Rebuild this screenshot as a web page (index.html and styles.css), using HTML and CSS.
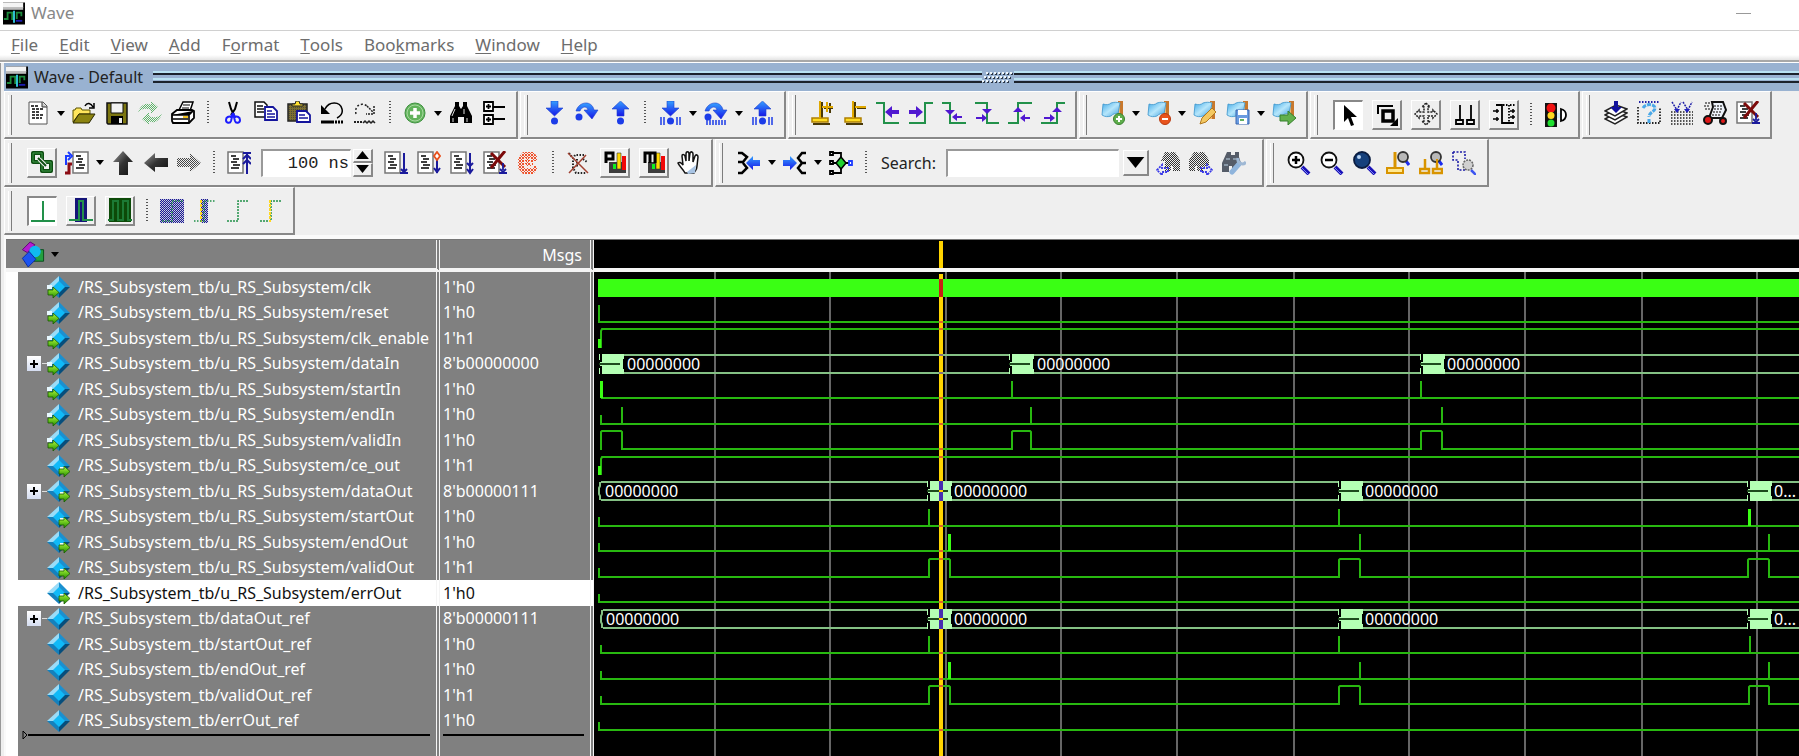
FILE: index.html
```html
<!DOCTYPE html>
<html lang="en">
<head>
<meta charset="utf-8">
<title>Wave</title>
<link rel="stylesheet" href="styles.css">
</head>
<body>
<svg class="sprite" aria-hidden="true">
  <defs>
    <pattern id="ck-green" width="2" height="2" patternUnits="userSpaceOnUse"><path d="M0 0h1v1H0zM1 1h1v1H1z" fill="#5fb56b"/></pattern>
    <pattern id="ck-gray" width="2" height="2" patternUnits="userSpaceOnUse"><path d="M0 0h1v1H0zM1 1h1v1H1z" fill="#333"/></pattern>
    <pattern id="ck-blue" width="2" height="2" patternUnits="userSpaceOnUse"><path d="M0 0h1v1H0zM1 1h1v1H1z" fill="#1b1b8f"/><path d="M1 0h1v1H1zM0 1h1v1H1z" fill="#b4b4dc"/></pattern>
    <pattern id="ck-red" width="3" height="3" patternUnits="userSpaceOnUse"><path d="M0 0h2v2H0zM2 2h1v1H2z" fill="#f0532c"/></pattern>
    <pattern id="ck-olive" width="2" height="2" patternUnits="userSpaceOnUse"><path d="M0 0h2v2H0z" fill="#7d7030"/><path d="M0 0h1v1H0z" fill="#4c4a3c"/></pattern>
    <linearGradient id="g-blue" x1="0" y1="0" x2="0" y2="1"><stop offset="0" stop-color="#35a0ff"/><stop offset="1" stop-color="#1616e8"/></linearGradient>
    <linearGradient id="g-dark" x1="0" y1="0" x2="1" y2="1"><stop offset="0" stop-color="#999"/><stop offset=".5" stop-color="#333"/><stop offset="1" stop-color="#111"/></linearGradient>
    <linearGradient id="g-flag" x1="0" y1="0" x2="1" y2="1"><stop offset="0" stop-color="#3fa9e8"/><stop offset=".5" stop-color="#b6e6fb"/><stop offset="1" stop-color="#3a9ddf"/></linearGradient>
    <linearGradient id="g-lime" x1="0" y1="0" x2="0" y2="1"><stop offset="0" stop-color="#b4ff3c"/><stop offset="1" stop-color="#1f8a00"/></linearGradient>
  </defs>
  <symbol id="app" viewBox="0 0 24 24"><path fill="#000" d="M0 0h24v24H0z"/><path fill="#f4f4f4" d="M0 0h22v6H0z"/><path fill="#bbb" d="M0 5h22v3H0z"/><path fill="none" stroke="#1c8a3c" stroke-width="2" d="M1 18h4v-7h5v7h2M15 18v-7h5v4"/><path fill="#35d0e8" d="M11 9h2v13h-2z"/><path fill="#1c1cb0" d="M14 19h7v2h-7z"/></symbol>
  <symbol id="caret" viewBox="0 0 8 5"><path fill="#000" d="M0 0h8L4 5z"/></symbol>
  <symbol id="page" viewBox="0 0 24 24"><path fill="#fff" stroke="#777" stroke-width="1.500" d="M1 1h15v21H1z"/><path stroke="#000" stroke-width="1.600" d="M4 5h5M6 8h6M4 11h6M6 14h7M4 17h8"/></symbol>
  <symbol id="page2" viewBox="0 0 24 24"><path fill="#fff" stroke="#777" stroke-width="1.5" d="M8 1h15v21H8z"/><path stroke="#000" stroke-width="1.6" d="M11 5h5M13 8h5M11 11h6M14 14h6M11 17h8"/></symbol>
  <symbol id="down" viewBox="0 0 24 24"><path fill="url(#g-blue)" stroke="#1c3ccc" stroke-width=".6" d="M9 0h7v7h5l-8.500 8L4 7h5z"/></symbol>
  <symbol id="up" viewBox="0 0 24 24"><path fill="url(#g-blue)" stroke="#1c3ccc" stroke-width=".6" d="M9 15h7V8h5L12.500 0 4 8h5z"/></symbol>
  <symbol id="over" viewBox="0 0 24 24"><path fill="url(#g-blue)" stroke="#1c3ccc" stroke-width=".6" d="M1 10C4 0 17-1 19 9h4l-6 9-8-9h4c-1-4-6-4-8 1z"/><circle cx="4" cy="16" r="3.500" fill="#1c3ce8"/></symbol>
  <symbol id="flag" viewBox="0 0 24 24"><path fill="#c8782c" d="M17 0h5v18h-5z"/><path fill="#f2b76c" d="M17 1h2v17h-2z"/><path fill="url(#g-flag)" stroke="#3a94cc" stroke-width=".8" d="M2 3c3 1 6 1 8-1 3-1 6-1 9 0l-2 11c-3-1-5 0-7 2-3 1-6 1-9-1z"/></symbol>
  <symbol id="diamond" viewBox="0 0 24 24"><path fill="#9adcf8" d="M12 1v6l-5 5H0z"/><path fill="#1b90d0" d="M12 1l11 11h-6l-5-5z"/><path fill="#1580bc" d="M0 12h7l5 5v6z"/><path fill="#064e7c" d="M12 23V17l5-5h6z"/><path fill="#10baf8" d="M12 6l6 6-6 6-6-6z"/></symbol>
  <symbol id="sig-in" viewBox="0 0 24 24"><use href="#diamond" width="24" height="24"/><path fill="#e8f8ff" d="M0 10h5v4H0z"/><path fill="url(#g-lime)" stroke="#1a5c00" stroke-width=".8" d="M1 15h5v-3l6 5.500L6 23v-3H1z"/></symbol>
  <symbol id="sig-out" viewBox="0 0 24 24"><use href="#diamond" width="24" height="24"/><path fill="#f4fff0" d="M13 13h5v3h-5z"/><path fill="url(#g-lime)" stroke="#1a5c00" stroke-width=".8" d="M12 15h5v-3l6 5.500L17 23v-3h-5z"/></symbol>
  <symbol id="lens" viewBox="0 0 24 24"><path stroke="#1a12b8" stroke-width="4" d="M15 16l7 7"/><path stroke="#7c88f0" stroke-width="1" d="M15 17l6 6"/></symbol>
  <symbol id="bars" viewBox="0 0 24 24"><path fill="#3c3c3c" d="M6 12h17v11H6z"/><path fill="#ffd800" stroke="#333" stroke-width=".6" d="M14 3h4v16h-4z"/><path fill="#f00808" d="M19 6h4v14h-4z"/><path fill="#10f020" d="M10 14h3v5h-3z"/></symbol>
  <symbol id="xpage" viewBox="0 0 24 24"><use href="#page" width="24" height="24"/><path stroke="#7c0a0a" stroke-width="3" d="M8 2l14 14M22 0L8 17"/><path fill="none" stroke="#1b1b9c" stroke-width="1.800" d="M20 12v7M17 18l3 3 3-3M16 22h8"/></symbol>
  <symbol id="burst" viewBox="0 0 25 20"><path fill="#000" d="M0 0h25v20H0z"/><path fill="#b4ffb4" d="M0 0h1v6H0zM0 14h1v6H0zM3 0h22v5h-1v10h1v5H3zM1 8h2v4H1z"/><path fill="#1d4a1d" d="M0 9h21v2H0z"/></symbol>
</svg>

<header class="titlebar">
  <svg class="app-icon" aria-hidden="true"><use href="#app"/></svg>
  <h1 class="title">Wave</h1>
  <button class="minimize" aria-label="Minimize"></button>
</header>

<nav class="menubar">
  <button class="menu"><u>F</u>ile</button>
  <button class="menu"><u>E</u>dit</button>
  <button class="menu"><u>V</u>iew</button>
  <button class="menu"><u>A</u>dd</button>
  <button class="menu">F<u>o</u>rmat</button>
  <button class="menu"><u>T</u>ools</button>
  <button class="menu">Boo<u>k</u>marks</button>
  <button class="menu"><u>W</u>indow</button>
  <button class="menu"><u>H</u>elp</button>
</nav>

<main class="dock">
  <div class="dock-title">
    <svg class="app-icon" aria-hidden="true"><use href="#app"/></svg>
    <h2 class="dock-name">Wave - Default</h2>
    <div class="rail"></div>
    <svg class="grip-dots" aria-hidden="true"><path stroke="#2c3644" stroke-width="2" stroke-dasharray="2 2" d="M5 4h26M3 8h26M1 12h26"/><path stroke="#eef6fb" stroke-width="2" stroke-dasharray="2 2" d="M4 3h26M2 7h26M0 11h26"/></svg>
    <div class="rail"></div>
  </div>

  <div class="band band-first">
    <div class="group">
      <button class="tool" aria-label="New"><svg class="icon" viewBox="0 0 24 24"><path fill="#fff" stroke="#555" d="M3 1h14l4 4v18H3z"/><path fill="#ccc" stroke="#333" d="M16 1v5h5"/><path stroke="#000" stroke-width="1.500" stroke-dasharray="3 1" d="M5 5h8M6 8h12M6 11h8M6 14h12M6 17h10"/></svg></button>
      <button class="drop" aria-label="New options"><svg class="caret"><use href="#caret"/></svg></button>
      <button class="tool" aria-label="Open"><svg class="icon" viewBox="0 0 24 24"><path fill="#ffe65c" stroke="#5a5200" d="M1 21V9h2l1-2h5l1 2h8v4H7z"/><path fill="#8c8410" stroke="#2a2800" d="M1 22l6-9h16l-6 9z"/><path fill="none" stroke="#000" stroke-width="1.500" d="M13 5c2-4 6-3 8 1M22 2v5h-5"/></svg></button>
      <button class="tool" aria-label="Save"><svg class="icon" viewBox="0 0 24 24"><path fill="#7c7610" stroke="#111" stroke-width="1.500" d="M2 2h20v21H3l-1-1z"/><path fill="#f2f2f2" stroke="#111" d="M6 2h12v10H6z"/><path fill="#000" d="M6 15h12v8H6z"/><path fill="#eee" d="M14 17h3v5h-3z"/></svg></button>
      <button class="tool" aria-label="Reload"><svg class="icon" viewBox="0 0 24 24"><path fill="url(#ck-green)" d="M0 11C3 3 9 1 13 4V0l7 6-7 7V9C9 7 4 7 0 11zM24 13c-3 8-9 10-13 7v4l-7-6 7-7v4c4 2 9 2 13-2z"/></svg></button>
      <button class="tool" aria-label="Print"><svg class="icon" viewBox="0 0 24 24"><path fill="#fff" stroke="#000" stroke-width="1.500" d="M8 9l4-8h10l-3 9z"/><path stroke="#000" d="M12 4h7M11 7h7"/><path fill="#fff" stroke="#000" stroke-width="1.800" d="M1 13l5-4h15l2 1v7l-5 5H2l-1-2z"/><path stroke="#000" stroke-width="1.600" d="M1 14h17l4-4M18 14v8M2 18h15"/><path fill="#f0c020" d="M12 15h5v2h-5z"/></svg></button>
      <span class="sep"></span>
      <button class="tool" aria-label="Cut"><svg class="icon" viewBox="0 0 24 24"><path fill="none" stroke="#000" stroke-width="2" d="M8 1l2 7 3 6M16 1l-2 7-4 6"/><path fill="none" stroke="#1c1cff" stroke-width="2" d="M12 12l-2 4c-2-1-5 0-5 3s4 4 5 1zM12 12l2 4c2-1 5 0 5 3s-4 4-5 1z"/></svg></button>
      <button class="tool" aria-label="Copy"><svg class="icon" viewBox="0 0 24 24"><path fill="#fff" stroke="#111" stroke-width="1.500" d="M1 1h9l3 3v12H1z"/><path stroke="#111" stroke-width="1.500" d="M3 5h6M3 8h7M3 11h7"/><path fill="#fff" stroke="#14149c" stroke-width="1.800" d="M11 6h8l4 4v9H11z"/><path stroke="#14149c" stroke-width="1.500" d="M13 10h5M13 13h8M13 16h8"/></svg></button>
      <button class="tool" aria-label="Paste"><svg class="icon" viewBox="0 0 24 24"><path fill="url(#ck-olive)" stroke="#222" stroke-width="1.500" d="M1 3h19v17H1z"/><path fill="#ffe030" stroke="#222" d="M5 5V3h3l1-3h3l1 3h3v2z"/><path fill="#fff" stroke="#14149c" stroke-width="1.800" d="M10 10h9l4 4v7H10z"/><path stroke="#14149c" stroke-width="1.500" d="M12 14h6M12 17h9"/></svg></button>
      <button class="tool" aria-label="Undo"><svg class="icon" viewBox="0 0 24 24"><path fill="#000" d="M1 4v9h9z"/><path fill="none" stroke="#000" stroke-width="1.500" d="M5 8c4-8 15-8 17 0 1 4-1 7-5 9"/><path stroke="#000" stroke-width="3" d="M1 21h13"/><path stroke="#000" stroke-width="3" stroke-dasharray="2 1" d="M15 21h9"/></svg></button>
      <button class="tool" aria-label="Redo"><svg class="icon" viewBox="0 0 24 24"><path fill="none" stroke="#222" stroke-width="1.500" stroke-dasharray="2 2" d="M3 13c-2-9 6-12 11-8"/><path fill="none" stroke="#222" stroke-width="1.500" stroke-dasharray="2 1" d="M14 5l7 7M21 5v8h-8"/><path fill="none" stroke="#222" stroke-width="1.500" d="M10 22l2-2 2 2 2-2 2 2 2-2 2 2"/><path stroke="#222" stroke-width="2" stroke-dasharray="2 1" d="M1 21h9"/></svg></button>
      <span class="sep"></span>
      <button class="tool" aria-label="Add selected"><svg class="icon" viewBox="0 0 24 24"><circle cx="12" cy="12" r="10" fill="#62b35c" stroke="#3f9140"/><circle cx="12" cy="12" r="8" fill="none" stroke="#a8d8a0"/><path stroke="#fff" stroke-width="3.500" d="M12 7v10M7 12h10"/></svg></button>
      <button class="drop" aria-label="Add options"><svg class="caret"><use href="#caret"/></svg></button>
      <button class="tool" aria-label="Find"><svg class="icon" viewBox="0 0 24 24"><path fill="#000" d="M6 1h4v4l2 3 2-3V1h4v4l5 10v7h-8v-6h-6v6H1v-7L6 5z"/><path stroke="#ddd" d="M6 8L3 15M15 8v5M4 17v4M18 17v4"/></svg></button>
      <button class="tool" aria-label="Expand"><svg class="icon" viewBox="0 0 24 24"><path fill="#fff" stroke="#000" stroke-width="1.800" d="M2 1h9v9H2zM2 14h9v9H2z"/><path stroke="#000" stroke-width="1.800" d="M4 5.500h5M6.500 3v5M4 18.500h5M6.500 16v5M11 6h12M11 18h12"/></svg></button>
    </div>
    <div class="group">
      <button class="tool" aria-label="Step into"><svg class="icon" viewBox="0 0 24 24"><use href="#down"/><circle cx="12.500" cy="20" r="3.500" fill="#1c3ce8"/></svg></button>
      <button class="tool" aria-label="Step over"><svg class="icon" viewBox="0 0 24 24"><use href="#over"/></svg></button>
      <button class="tool" aria-label="Step out"><svg class="icon" viewBox="0 0 24 24"><use href="#up"/><circle cx="12.500" cy="20" r="3.500" fill="#1c3ce8"/></svg></button>
      <span class="sep"></span>
      <button class="tool" aria-label="Step into current"><svg class="icon" viewBox="0 0 24 24"><use href="#down"/><circle cx="12.500" cy="20" r="3.500" fill="#1c3ce8"/><path stroke="#1c3ce8" stroke-width="1.500" d="M3 16v8M6 16v8M19 16v8M22 16v8"/></svg></button>
      <button class="drop" aria-label="Step into options"><svg class="caret"><use href="#caret"/></svg></button>
      <button class="tool" aria-label="Step over current"><svg class="icon" viewBox="0 0 24 24"><use href="#over"/><path stroke="#1c3ce8" stroke-width="1.500" d="M3 19v5M6 19v5M9 19v5M12 19v5M15 19v5M18 19v5M21 19v5"/></svg></button>
      <button class="drop" aria-label="Step over options"><svg class="caret"><use href="#caret"/></svg></button>
      <button class="tool" aria-label="Step out current"><svg class="icon" viewBox="0 0 24 24"><use href="#up"/><circle cx="12.500" cy="20" r="3.500" fill="#1c3ce8"/><path stroke="#1c3ce8" stroke-width="1.500" d="M3 16v8M6 16v8M19 16v8M22 16v8"/></svg></button>
    </div>
    <div class="group">
      <button class="tool" aria-label="Insert cursor"><svg class="icon" viewBox="0 0 24 24"><path fill="none" stroke="#4a3a08" stroke-width="2" d="M12 1v16M20 2v10M14 7h9M3 23h17"/><path fill="#ffdc20" stroke="#b08000" stroke-width="1.500" d="M2 17h16v4H2z"/><path stroke="#e0a800" stroke-width="2" d="M10 0v17M12 6h11M17 1v10"/></svg></button>
      <button class="tool" aria-label="Delete cursor"><svg class="icon" viewBox="0 0 24 24"><path fill="none" stroke="#4a3a08" stroke-width="2" d="M12 1v16M14 7h9M3 23h17"/><path fill="#ffdc20" stroke="#b08000" stroke-width="1.500" d="M2 17h16v4H2z"/><path stroke="#e0a800" stroke-width="2" d="M10 0v17M12 6h11"/></svg></button>
      <button class="tool" aria-label="Previous transition"><svg class="icon" viewBox="0 0 24 24"><path fill="none" stroke="#22914a" stroke-width="2" d="M0 2h8v20h15"/><path fill="#5018d0" d="M9 11l7-6v4h7v4h-7v4z"/></svg></button>
      <button class="tool" aria-label="Next transition"><svg class="icon" viewBox="0 0 24 24"><path fill="none" stroke="#22914a" stroke-width="2" d="M0 22h16V2h8"/><path fill="#5018d0" d="M14 11L7 5v4H0v4h7v4z"/></svg></button>
      <button class="tool" aria-label="Previous falling edge"><svg class="icon" viewBox="0 0 24 24"><path fill="none" stroke="#22914a" stroke-width="2" d="M0 2h8v20h16"/><path fill="#5018d0" d="M3 9h10l-5 5zM10 16l5-4v3h5v2h-5v3z"/></svg></button>
      <button class="tool" aria-label="Next falling edge"><svg class="icon" viewBox="0 0 24 24"><path fill="none" stroke="#22914a" stroke-width="2" d="M0 2h12v20h12"/><path fill="#5018d0" d="M7 8h10l-5 5zM12 17l-5-4v3H1v2h6v3z"/></svg></button>
      <button class="tool" aria-label="Previous rising edge"><svg class="icon" viewBox="0 0 24 24"><path fill="none" stroke="#22914a" stroke-width="2" d="M0 22h10V2h14"/><path fill="#5018d0" d="M5 11h10l-5-5zM12 17l5-4v3h5v2h-5v3z"/></svg></button>
      <button class="tool" aria-label="Next rising edge"><svg class="icon" viewBox="0 0 24 24"><path fill="none" stroke="#22914a" stroke-width="2" d="M0 22h16V2h8"/><path fill="#5018d0" d="M11 11h10l-5-5zM14 17l-5-4v3H3v2h6v3z"/></svg></button>
    </div>
    <div class="group">
      <button class="tool" aria-label="Add bookmark"><svg class="icon" viewBox="0 0 24 24"><use href="#flag"/><circle cx="18" cy="18" r="5.500" fill="#5fae4c" stroke="#3a8030"/><path stroke="#fff" stroke-width="2" d="M18 15v6M15 18h6"/></svg></button>
      <button class="drop" aria-label="Add bookmark options"><svg class="caret"><use href="#caret"/></svg></button>
      <button class="tool" aria-label="Delete bookmark"><svg class="icon" viewBox="0 0 24 24"><use href="#flag"/><circle cx="18" cy="18" r="5.500" fill="#e8531c" stroke="#b83a10"/><path stroke="#fff" stroke-width="2" d="M15 18h6"/></svg></button>
      <button class="drop" aria-label="Delete bookmark options"><svg class="caret"><use href="#caret"/></svg></button>
      <button class="tool" aria-label="Manage bookmarks"><svg class="icon" viewBox="0 0 24 24"><use href="#flag"/><path fill="#f4c860" stroke="#b07820" d="M7 23l2-6L19 7l4 4-10 10z"/></svg></button>
      <button class="tool" aria-label="Save bookmarks"><svg class="icon" viewBox="0 0 24 24"><use href="#flag"/><path fill="#6a9ce0" stroke="#3a66b0" d="M10 9h13v14H10z"/><path fill="#fff" d="M12 9h9v5h-9zM13 17h8v6h-8z"/><path stroke="#60b060" stroke-width="2" d="M14 19h4"/></svg></button>
      <button class="drop" aria-label="Save bookmark options"><svg class="caret"><use href="#caret"/></svg></button>
      <button class="tool" aria-label="Go to bookmark"><svg class="icon" viewBox="0 0 24 24"><use href="#flag"/><path fill="#62b04c" stroke="#35802c" d="M8 14h8v-4l8 7-8 7v-4H8z"/></svg></button>
    </div>
    <div class="group group-modes">
      <button class="tool raised pressed" aria-label="Select mode"><svg class="icon" viewBox="0 0 24 24"><path fill="#000" d="M7 2v17l4-4 3 8 3-1-3-8h6z"/></svg></button>
      <button class="tool raised" aria-label="Zoom mode"><svg class="icon" viewBox="0 0 24 24"><path fill="none" stroke="#000" stroke-width="2" d="M3 12V4h15"/><path fill="none" stroke="#000" stroke-width="3.500" d="M8 9h10v10H8z"/><path fill="#000" d="M23 16v8h-8z"/></svg></button>
      <button class="tool raised" aria-label="Pan mode"><svg class="icon" viewBox="0 0 24 24"><path fill="none" stroke="#222" stroke-width="1.500" stroke-dasharray="2 1" d="M12 1l4 4h-2v5h5V8l4 4-4 4v-2h-5v5h2l-4 4-4-4h2v-5H5v2l-4-4 4-4v2h5V5H8z"/></svg></button>
      <button class="tool raised" aria-label="Two cursor mode"><svg class="icon" viewBox="0 0 24 24"><path fill="none" stroke="#000" stroke-width="1.800" d="M7 3v15M3 18h7v4H3zM18 3v15M14 18h7v4h-7z"/></svg></button>
      <button class="tool raised" aria-label="Edit mode"><svg class="icon" viewBox="0 0 24 24"><path fill="none" stroke="#000" stroke-width="1.800" d="M4 3h6v18h12"/><path fill="none" stroke="#000" stroke-width="1.800" stroke-dasharray="1.500 1.500" d="M11 3h6v18M18 3h5"/><path stroke="#000" stroke-width="1.500" d="M1 9h6M5 7v4M1 17h6M5 15v4M18 9h5M21 7v4M18 15h5M21 13v4"/></svg></button>
      <span class="sep"></span>
      <button class="tool" aria-label="Stop drawing"><svg class="icon" viewBox="0 0 24 24"><path fill="#111" d="M1 0h12v24H1z"/><circle cx="7" cy="5" r="4.500" fill="#f01010"/><circle cx="7" cy="12.500" r="3.500" fill="#ffd820"/><circle cx="7" cy="20" r="3.500" fill="#20e030"/><path fill="#cfeaf8" d="M13 10h4v5h-4z"/><path fill="#fff" stroke="#000" stroke-width="1.800" d="M17 6c4 1 5 4 5 6s-1 5-5 6z"/></svg></button>
    </div>
    <div class="group">
      <button class="tool" aria-label="Import layers"><svg class="icon" viewBox="0 0 24 24"><path fill="#fff" stroke="#222" stroke-width="1.500" d="M1 18l11-6 11 4-12 7z"/><path fill="#fff" stroke="#222" stroke-width="1.500" d="M1 14l11-6 11 4-12 7z"/><path fill="#fff" stroke="#222" stroke-width="1.500" d="M1 10l11-6 11 4-12 7z"/><path fill="#10109c" d="M10 0h4v6h4l-6 6-6-6h4z"/></svg></button>
      <button class="tool" aria-label="Query"><svg class="icon" viewBox="0 0 24 24"><path fill="none" stroke="#222" stroke-width="1.800" stroke-dasharray="1.500 1.500" d="M1 6v16h22V6"/><path stroke="#2020a8" stroke-width="1.800" stroke-dasharray="1.500 1.500" d="M2 1h20"/><path fill="none" stroke="#49a8e8" stroke-width="3" stroke-dasharray="4 1" d="M6 7c3-5 12-4 12 0 0 4-6 4-6 9M12 18v4"/></svg></button>
      <button class="tool" aria-label="Load grid"><svg class="icon" viewBox="0 0 24 24"><path fill="none" stroke="#222" stroke-width="1.500" stroke-dasharray="1.500 1.500" d="M1 11h22M1 14h22M1 17h22M1 20h22M1 23h22"/><path fill="none" stroke="#2020a8" stroke-width="1.500" stroke-dasharray="2 1" d="M2 1l5 8 4-8M13 1l5 8 4-8"/><path fill="#2020c0" d="M4 8h6l-3 4zM14 8h6l-3 4z"/></svg></button>
      <button class="tool" aria-label="Inspect"><svg class="icon" viewBox="0 0 24 24"><path fill="#eef3fb" stroke="#111" stroke-width="2" d="M9 1h11l3 8-4 8H6L10 6z"/><path stroke="#555" stroke-width="1.500" stroke-dasharray="2 1" d="M11 5h8M11 8h8M10 11h8M9 14h8M2 2h5M1 5h5M2 8h5"/><circle cx="5" cy="19" r="4" fill="#e01818" stroke="#111" stroke-width="2"/><circle cx="20" cy="20" r="3" fill="#e01818" stroke="#111" stroke-width="2"/></svg></button>
      <button class="tool" aria-label="Clear"><svg class="icon" viewBox="0 0 24 24"><use href="#xpage"/></svg></button>
    </div>
  </div>

  <div class="band">
    <div class="group">
      <button class="tool raised" aria-label="Link"><svg class="icon" viewBox="0 0 24 24"><path fill="none" stroke="#0c4c10" stroke-width="4" stroke-linejoin="round" d="M3 3h9v9H3zM12 12h9v9h-9z"/><path fill="none" stroke="#3f9a48" stroke-width="1" d="M3 3h9v9H3zM12 12h9v9h-9z"/><path stroke="#efefef" stroke-width="4" d="M9 9l6 6"/><path stroke="#0c4c10" stroke-width="2" d="M8 8l8 8"/></svg></button>
      <button class="tool" aria-label="Trace"><svg class="icon" viewBox="0 0 24 24"><use href="#page2"/><path fill="none" stroke="#1c3cff" stroke-width="2" d="M1 14V5h4M3 1l4 4-4 4"/><path fill="none" stroke="#8c0c14" stroke-width="3" d="M0 22h4v-9h3"/></svg></button>
      <button class="drop" aria-label="Trace options"><svg class="caret"><use href="#caret"/></svg></button>
      <button class="tool" aria-label="Up"><svg class="icon" viewBox="0 0 24 24"><path fill="url(#g-dark)" d="M12 0l10 11h-5v13H8V11H2z"/></svg></button>
      <button class="tool" aria-label="Back"><svg class="icon" viewBox="0 0 24 24"><path fill="url(#g-dark)" d="M0 12L11 2v5h13v9H11v5z"/></svg></button>
      <button class="tool" aria-label="Forward"><svg class="icon" viewBox="0 0 24 24"><path fill="url(#ck-gray)" opacity=".9" d="M24 12L13 2v5H0v9h13v5z"/></svg></button>
      <span class="sep"></span>
      <button class="tool" aria-label="Restart"><svg class="icon" viewBox="0 0 24 24"><use href="#page"/><path fill="none" stroke="#1b1b9c" stroke-width="2" d="M20 3v20M16 2h8M16 8l4-4 4 4M16 13l4-4 4 4"/></svg></button>
      <div class="runlength">
        <input class="field mono" type="text" value="100 ns" aria-label="Run length">
        <div class="spin">
          <button class="step" aria-label="Increase"><svg class="step-caret flip"><use href="#caret"/></svg></button>
          <button class="step" aria-label="Decrease"><svg class="step-caret"><use href="#caret"/></svg></button>
        </div>
      </div>
      <button class="tool" aria-label="Run"><svg class="icon" viewBox="0 0 24 24"><use href="#page"/><path fill="none" stroke="#1b1b9c" stroke-width="2" d="M20 2v18M17 18l3 3 3-3M16 22h8"/></svg></button>
      <button class="tool" aria-label="Continue"><svg class="icon" viewBox="0 0 24 24"><use href="#page"/><path fill="none" stroke="#1b1b9c" stroke-width="2" d="M20 8v14M17 17l3 4 3-4"/><path fill="#fff" stroke="#e8501c" stroke-width="1.800" d="M20 1l3 4-3 4-3-4z"/></svg></button>
      <button class="tool" aria-label="Run all"><svg class="icon" viewBox="0 0 24 24"><use href="#page"/><path fill="none" stroke="#1b1b9c" stroke-width="2" d="M20 2v20M17 12l3 3 3-3M17 18l3 4 3-4"/></svg></button>
      <button class="tool" aria-label="Stop run"><svg class="icon" viewBox="0 0 24 24"><use href="#xpage"/></svg></button>
      <button class="tool" aria-label="Stop"><svg class="icon" viewBox="0 0 24 24"><path fill="url(#ck-red)" d="M7 1h10l4 4v5h-4v5h4v4l-4 4H7l-5-6V7z"/><path fill="none" stroke="#f8e8e0" stroke-width="2" stroke-dasharray="2 1" d="M9 7v9h9M14 7v6h6"/></svg></button>
      <span class="sep"></span>
      <button class="tool" aria-label="Break"><svg class="icon" viewBox="0 0 24 24"><path fill="none" stroke="#222" stroke-width="2" stroke-dasharray="1.500 1.500" d="M18 4H9L7 8v9l3 5h10M11 8v8M17 8l4 3M3 2l3 4"/><path stroke="#a04030" stroke-width="1.500" d="M2 2l20 20M20 4L3 22"/></svg></button>
      <button class="tool raised" aria-label="Performance profiling"><svg class="icon" viewBox="0 0 24 24"><use href="#bars"/><path fill="none" stroke="#000" stroke-width="3" d="M3 13V3h7v6H4"/></svg></button>
      <button class="tool raised" aria-label="Memory profiling"><svg class="icon" viewBox="0 0 24 24"><use href="#bars"/><path fill="none" stroke="#000" stroke-width="3" d="M3 13V3h10v10M8 3v10"/></svg></button>
      <button class="tool" aria-label="Edit breakpoints"><svg class="icon" viewBox="0 0 24 24"><path fill="#fff" stroke="#111" stroke-width="1.500" d="M8 22c-2-4-6-7-7-10 1-1 3-1 5 2L5 5c0-2 2-2 3 0l1 5V3c0-3 3-3 3 0v7l1-8c1-2 3-1 3 1v8l2-6c1-2 3-1 3 1l-1 9c0 4-2 5-3 7z"/><path fill="#a8c4e4" d="M10 21l9-7-1 8-7 1z"/></svg></button>
    </div>
    <div class="group">
      <button class="tool" aria-label="Find drivers"><svg class="icon" viewBox="0 0 24 24"><path fill="none" stroke="#000" stroke-width="2.500" d="M1 2h4l5 4-4 5H1M6 12l4 5-5 5H1"/><path fill="url(#g-blue)" d="M9 12l7-7v4h7v6h-7v4z"/></svg></button>
      <button class="drop" aria-label="Driver options"><svg class="caret"><use href="#caret"/></svg></button>
      <button class="tool" aria-label="Find readers"><svg class="icon" viewBox="0 0 24 24"><path fill="none" stroke="#000" stroke-width="2.500" d="M23 2h-4l-4 5 4 5h4M19 12l-4 5 4 5h4"/><path fill="url(#g-blue)" d="M14 12L7 5v4H0v6h7v4z"/></svg></button>
      <button class="drop" aria-label="Reader options"><svg class="caret"><use href="#caret"/></svg></button>
      <button class="tool" aria-label="Show connectivity"><svg class="icon" viewBox="0 0 24 24"><path fill="none" stroke="#000" stroke-width="1.800" d="M1 1h3v3H1zM1 10h3v3H1zM1 20h3v3H1zM4 2h8v20H4M4 12h16"/><path fill="#20d030" stroke="#000" stroke-width="1.500" d="M12 6l5 6-5 6-5-6z"/><path fill="#fff" stroke="#1c3cff" stroke-width="1.800" d="M20 10h3v4h-3z"/></svg></button>
      <span class="sep"></span>
      <label class="search-label" for="search">Search:</label>
      <input class="field search" id="search" type="text">
      <button class="combo" aria-label="Search history"><svg class="combo-caret"><use href="#caret"/></svg></button>
      <button class="tool" aria-label="Search reverse"><svg class="icon" viewBox="0 0 24 24"><path fill="url(#ck-gray)" d="M9 1h4l1 2 1-2h4l5 8v11h-7v-5h-2v5H9V10H5z"/><path fill="none" stroke="#3a3ae8" stroke-width="1.800" stroke-dasharray="2 1" d="M1 19l5-5v3h6v4H6v3z"/></svg></button>
      <button class="tool" aria-label="Search forward"><svg class="icon" viewBox="0 0 24 24"><path fill="url(#ck-gray)" d="M5 1h4l1 2 1-2h4l5 8v6l-6 1v4H8v-5H6v5H0V9z"/><path fill="none" stroke="#3a3ae8" stroke-width="1.800" stroke-dasharray="2 1" d="M23 19l-5-5v3h-6v4h6v3z"/></svg></button>
      <button class="tool search-end" aria-label="Search options"><svg class="icon" viewBox="0 0 24 24"><path fill="#555c68" d="M5 1h4v3h4V1h4v5l2 6-4 3v4h-5v-4H7v6H0v-9z"/><path stroke="#9ab" stroke-width="1.500" d="M4 8h4M11 8h4M2 14h4"/><path stroke="#8fb4dc" stroke-width="5" stroke-linecap="round" d="M10 21l7-8"/><path fill="none" stroke="#9fb8d4" stroke-width="3" d="M16 7c-1 5 5 8 8 4"/></svg></button>
    </div>
    <div class="group">
      <button class="tool" aria-label="Zoom in"><svg class="icon" viewBox="0 0 24 24"><use href="#lens"/><circle cx="9" cy="9" r="7.500" fill="#fff" stroke="#111" stroke-width="1.800"/><path stroke="#000" stroke-width="2.500" d="M9 5v8M5 9h8"/></svg></button>
      <button class="tool" aria-label="Zoom out"><svg class="icon" viewBox="0 0 24 24"><use href="#lens"/><circle cx="9" cy="9" r="7.500" fill="#fff" stroke="#111" stroke-width="1.800"/><path stroke="#000" stroke-width="2.500" d="M5 9h8"/></svg></button>
      <button class="tool" aria-label="Zoom full"><svg class="icon" viewBox="0 0 24 24"><use href="#lens"/><circle cx="9" cy="9" r="8" fill="#15407c" stroke="#0a1c40" stroke-width="1.800"/><circle cx="6" cy="6" r="2" fill="#b8d4f4"/></svg></button>
      <button class="tool" aria-label="Zoom on cursor"><svg class="icon" viewBox="0 0 24 24"><path fill="none" stroke="#d89400" stroke-width="3" d="M9 1v16"/><path fill="#ffe890" stroke="#d89400" stroke-width="2" d="M1 17h16v5H1z"/><path stroke="#1c2cf0" stroke-width="3" d="M20 10l3 4"/><circle cx="17" cy="6" r="5" fill="#b8b8b8" stroke="#333" stroke-width="1.800"/></svg></button>
      <button class="tool" aria-label="Zoom between cursors"><svg class="icon" viewBox="0 0 24 24"><path fill="none" stroke="#d89400" stroke-width="2.500" d="M6 8v10M1 18h9v4H1zM18 8v10M14 18h9v4h-9z"/><path stroke="#1c2cf0" stroke-width="3" d="M20 10l3 4"/><circle cx="17" cy="6" r="5" fill="#b8b8b8" stroke="#333" stroke-width="1.800"/><path stroke="#d89400" stroke-width="2" d="M18 8v8"/></svg></button>
      <button class="tool" aria-label="Zoom area"><svg class="icon" viewBox="0 0 24 24"><path fill="none" stroke="#1c1ca8" stroke-width="1.600" stroke-dasharray="2 1.500" d="M1 1h12v7M1 1v8h5v10h7"/><path stroke="#3c54f0" stroke-width="2.500" d="M19 19l5 5"/><circle cx="16" cy="14" r="5" fill="#d0d0d0" stroke="#666" stroke-width="1.500" stroke-dasharray="2 1"/></svg></button>
    </div>
  </div>

  <div class="band">
    <div class="group">
      <button class="tool raised pressed" aria-label="Plain time"><svg class="icon" viewBox="0 0 24 24"><path fill="none" stroke="#22914a" stroke-width="2" d="M0 22h24M12 2v20"/></svg></button>
      <button class="tool raised" aria-label="Delta time"><svg class="icon" viewBox="0 0 24 24"><path fill="#141478" d="M6 0h12v24H6z"/><path fill="none" stroke="#22914a" stroke-width="2" d="M0 22h10V3h4v19h10"/></svg></button>
      <button class="tool raised" aria-label="Event time"><svg class="icon" viewBox="0 0 24 24"><path fill="#0c4a08" d="M1 0h22v24H1z"/><path fill="none" stroke="#1c7a34" stroke-width="2" d="M0 22h5V3h5v19h5V3h5v19h4"/></svg></button>
      <span class="sep"></span>
      <button class="tool" aria-label="Expand all"><svg class="icon" viewBox="0 0 24 24"><path fill="url(#ck-blue)" d="M0 0h24v24H0z"/><path fill="none" stroke="#22914a" stroke-width="1.500" stroke-dasharray="1.500 1.500" d="M2 22h10V2h11"/></svg></button>
      <button class="tool" aria-label="Expand at cursor"><svg class="icon" viewBox="0 0 24 24"><path fill="url(#ck-blue)" d="M8 0h7v24H8z"/><path stroke="#ffd820" stroke-width="2" stroke-dasharray="3 1" d="M8 1v22"/><path fill="none" stroke="#22914a" stroke-width="1.500" stroke-dasharray="1.500 1.500" d="M1 22h10V2h12"/></svg></button>
      <button class="tool" aria-label="Collapse all"><svg class="icon" viewBox="0 0 24 24"><path fill="none" stroke="#22914a" stroke-width="1.500" stroke-dasharray="2 1" d="M1 22h11V2h11"/></svg></button>
      <button class="tool" aria-label="Collapse at cursor"><svg class="icon" viewBox="0 0 24 24"><path fill="none" stroke="#22914a" stroke-width="1.500" stroke-dasharray="2 1" d="M1 22h11V2h11"/><path stroke="#ffd820" stroke-width="2" stroke-dasharray="3 1" d="M11 1v22"/></svg></button>
    </div>
  </div>

  <section class="viewer">
    <table class="signals">
      <thead>
        <tr>
          <th class="col-name"><div class="head-tools"><svg class="shapes" viewBox="0 0 24 27" aria-hidden="true"><path fill="#b41cd0" stroke="#5c0a70" d="M1 9l8-8 5 3-8 8z"/><path fill="#22a040" stroke="#0a4c1c" d="M13 9h10v12H13z"/><circle cx="14" cy="11" r="6" fill="#10baf0"/><path fill="#1c54f0" stroke="#0c2ca0" d="M8 11l7 8-8 8-6-9z"/></svg><svg class="caret" aria-hidden="true"><use href="#caret"/></svg></div></th>
          <th class="col-value">Msgs</th>
        </tr>
      </thead>
      <tbody>
        <tr><td class="name"><div class="cell"><span class="node"></span><svg class="sig"><use href="#sig-in"/></svg>/RS_Subsystem_tb/u_RS_Subsystem/clk</div></td><td class="value">1'h0</td></tr>
        <tr><td class="name"><div class="cell"><span class="node"></span><svg class="sig"><use href="#sig-in"/></svg>/RS_Subsystem_tb/u_RS_Subsystem/reset</div></td><td class="value">1'h0</td></tr>
        <tr><td class="name"><div class="cell"><span class="node"></span><svg class="sig"><use href="#sig-in"/></svg>/RS_Subsystem_tb/u_RS_Subsystem/clk_enable</div></td><td class="value">1'h1</td></tr>
        <tr><td class="name"><div class="cell"><span class="node"><button class="expand" aria-label="Expand dataIn"></button></span><svg class="sig"><use href="#sig-in"/></svg>/RS_Subsystem_tb/u_RS_Subsystem/dataIn</div></td><td class="value">8'b00000000</td></tr>
        <tr><td class="name"><div class="cell"><span class="node"></span><svg class="sig"><use href="#sig-in"/></svg>/RS_Subsystem_tb/u_RS_Subsystem/startIn</div></td><td class="value">1'h0</td></tr>
        <tr><td class="name"><div class="cell"><span class="node"></span><svg class="sig"><use href="#sig-in"/></svg>/RS_Subsystem_tb/u_RS_Subsystem/endIn</div></td><td class="value">1'h0</td></tr>
        <tr><td class="name"><div class="cell"><span class="node"></span><svg class="sig"><use href="#sig-in"/></svg>/RS_Subsystem_tb/u_RS_Subsystem/validIn</div></td><td class="value">1'h0</td></tr>
        <tr><td class="name"><div class="cell"><span class="node"></span><svg class="sig"><use href="#sig-out"/></svg>/RS_Subsystem_tb/u_RS_Subsystem/ce_out</div></td><td class="value">1'h1</td></tr>
        <tr><td class="name"><div class="cell"><span class="node"><button class="expand" aria-label="Expand dataOut"></button></span><svg class="sig"><use href="#sig-out"/></svg>/RS_Subsystem_tb/u_RS_Subsystem/dataOut</div></td><td class="value">8'b00000111</td></tr>
        <tr><td class="name"><div class="cell"><span class="node"></span><svg class="sig"><use href="#sig-out"/></svg>/RS_Subsystem_tb/u_RS_Subsystem/startOut</div></td><td class="value">1'h0</td></tr>
        <tr><td class="name"><div class="cell"><span class="node"></span><svg class="sig"><use href="#sig-out"/></svg>/RS_Subsystem_tb/u_RS_Subsystem/endOut</div></td><td class="value">1'h0</td></tr>
        <tr><td class="name"><div class="cell"><span class="node"></span><svg class="sig"><use href="#sig-out"/></svg>/RS_Subsystem_tb/u_RS_Subsystem/validOut</div></td><td class="value">1'h1</td></tr>
        <tr class="selected"><td class="name"><div class="cell"><span class="node"></span><svg class="sig"><use href="#sig-out"/></svg>/RS_Subsystem_tb/u_RS_Subsystem/errOut</div></td><td class="value">1'h0</td></tr>
        <tr><td class="name"><div class="cell"><span class="node"><button class="expand" aria-label="Expand dataOut_ref"></button></span><svg class="sig"><use href="#diamond"/></svg>/RS_Subsystem_tb/dataOut_ref</div></td><td class="value">8'b00000111</td></tr>
        <tr><td class="name"><div class="cell"><span class="node"></span><svg class="sig"><use href="#diamond"/></svg>/RS_Subsystem_tb/startOut_ref</div></td><td class="value">1'h0</td></tr>
        <tr><td class="name"><div class="cell"><span class="node"></span><svg class="sig"><use href="#diamond"/></svg>/RS_Subsystem_tb/endOut_ref</div></td><td class="value">1'h0</td></tr>
        <tr><td class="name"><div class="cell"><span class="node"></span><svg class="sig"><use href="#diamond"/></svg>/RS_Subsystem_tb/validOut_ref</div></td><td class="value">1'h1</td></tr>
        <tr><td class="name"><div class="cell"><span class="node"></span><svg class="sig"><use href="#diamond"/></svg>/RS_Subsystem_tb/errOut_ref</div></td><td class="value">1'h0</td></tr>
        <tr class="rest"><td class="name"><div class="insert-line"><svg class="marker" viewBox="0 0 6 10"><path fill="none" stroke="#000" d="M1 1v8l4-4z"/></svg></div></td><td class="value"><div class="insert-line"></div></td></tr>
      </tbody>
    </table>

    <div class="waves">
      <svg class="ruler" aria-hidden="true"><rect class="cursor" x="345" y="1" width="4" height="27"/></svg>
      <svg class="canvas" role="img" aria-label="Signal waveforms">
        <path class="grid" d="M121 0V2000M236 0V2000M352 0V2000M467 0V2000M583 0V2000M700 0V2000M815 0V2000M931 0V2000M1048 0V2000M1163 0V2000"/>
        <rect class="clock" x="4" y="7" width="100%" height="18"/>
        <g class="bit">
          <path d="M5 33V50H4000"/>
          <path d="M7 76V59L8 57H4000"/>
          <path d="M7 126H4000M418 109V126M827 109V126"/>
          <path d="M7 143V152H4000M28 135V152M437 135V152M848 135V152"/>
          <path d="M7 178V160L8 159H27L28 160V177H418V160L419 159H436L437 160V177H827V160L828 159H847L848 160V177H4000"/>
          <path d="M7 203V187L8 185H4000"/>
          <path d="M5 245V254H4000M335 237V254M745 237V254M1155 237V254"/>
          <path d="M5 271V279H4000M355 262V279M766 262V279M1175 262V279"/>
          <path d="M5 296V305H335V288L336 287H355L356 288V305H745V288L746 287H765L766 288V305H1154V288L1155 287H1174L1175 288V305H4000"/>
          <path d="M5 322V330H4000"/>
          <path d="M7 373V381H4000M335 364V381M745 364V381M1156 364V381"/>
          <path d="M7 399V407H4000M355 390V407M766 390V407M1175 390V407"/>
          <path d="M7 424V432H335V415L336 414H355L356 415V432H745V415L746 414H765L766 415V432H1155V415L1156 414H1174L1175 415V432H4000"/>
          <path d="M5 450V458H4000"/>
        </g>
        <path class="solid" d="M4 67h3v9H4zM4 194h3v9H4zM6 109h3v17H6zM1154 237h3v17h-3zM354 262h3v17h-3zM354 390h3v17h-3z"/>
        <g class="bus">
          <path d="M6 83H4000M6 101H4000"/>
          <path d="M7 210H4000M7 228H4000M6 210V214L5 216V222L6 224V228"/>
          <path d="M9 338H4000M9 356H4000M8 338V342L7 344V350L8 352V356"/>
        </g>
        <use href="#burst" x="5" y="82" width="25" height="20"/>
        <use href="#burst" x="415" y="82" width="25" height="20"/>
        <use href="#burst" x="826" y="82" width="25" height="20"/>
        <use href="#burst" x="333" y="209" width="25" height="20"/>
        <use href="#burst" x="744" y="209" width="25" height="20"/>
        <use href="#burst" x="1153" y="209" width="25" height="20"/>
        <use href="#burst" x="333" y="337" width="25" height="20"/>
        <use href="#burst" x="744" y="337" width="25" height="20"/>
        <use href="#burst" x="1153" y="337" width="25" height="20"/>
        <g class="bus-text">
          <text x="33" y="98">00000000</text><text x="443" y="98">00000000</text><text x="853" y="98">00000000</text>
          <text x="11" y="225">00000000</text><text x="360" y="225">00000000</text><text x="771" y="225">00000000</text><text x="1180" y="225">0...</text>
          <text x="12" y="353">00000000</text><text x="360" y="353">00000000</text><text x="771" y="353">00000000</text><text x="1180" y="353">0...</text>
        </g>
        <rect class="cursor" x="345" y="2" width="4" height="2000"/>
        <path fill="#c82014" d="M345 7h4v18h-4z"/>
        <path stroke="#e06030" stroke-width="2" d="M345 50h4M345 57h4M345 126h4M345 152h4M345 177h4M345 185h4M345 254h4M345 279h4M345 287h4M345 330h4M345 381h4M345 407h4M345 414h4M345 458h4"/>
        <path stroke="#8a7080" stroke-width="2" d="M345 83h4M345 101h4"/>
        <path fill="#4630b0" d="M345 209h4v9h-4zM345 220h4v9h-4zM345 337h4v9h-4zM345 348h4v9h-4z"/>
      </svg>
    </div>
  </section>
</main>
</body>
</html>
```
FILE: styles.css
```css
* {
  box-sizing: border-box;
}

html,
body {
  height: 100%;
}

body {
  display: flex;
  flex-direction: column;
  margin: 0;
  overflow: hidden;
  background: #fff;
  color: #222;
  font: 16px "Noto Sans", "Open Sans", sans-serif;
}

button {
  display: inline-flex;
  align-items: center;
  justify-content: center;
  flex: none;
  margin: 0;
  padding: 0;
  border: 0;
  background: none;
  color: inherit;
  font: inherit;
}

svg {
  display: block;
  flex: none;
}

.sprite {
  position: absolute;
  width: 0;
  height: 0;
}

/* Window frame */
.titlebar {
  display: flex;
  align-items: center;
  flex: none;
  gap: 6px;
  height: 31px;
  padding: 0 48px 4px 3px;
  border-bottom: 1px solid #d0d0d0;
}

.app-icon {
  width: 22px;
  height: 23px;
}

.title {
  flex: 1;
  margin: 0;
  color: #888;
  font-size: 17px;
  font-weight: 400;
  line-height: 24px;
}

.minimize {
  width: 15px;
  height: 16px;
}

.minimize::before {
  content: "";
  width: 15px;
  height: 1px;
  background: #999;
}

.menubar {
  display: flex;
  gap: 21px;
  flex: none;
  height: 31px;
  padding: 0 11px 2px;
  border-bottom: 2px solid #a8a8a8;
  background: linear-gradient(#fff 24px, #e4e4e4);
  color: #6d6d6d;
}

.menu {
  font-size: 17px;
}

.menu u {
  text-underline-offset: 2px;
}

.dock {
  display: flex;
  flex: 1;
  flex-direction: column;
  min-height: 0;
  margin-top: 1px;
  padding-left: 3px;
  border-left: 1px solid #999;
  background: #efefef;
}

.dock-title {
  display: flex;
  align-items: center;
  flex: none;
  height: 28px;
  padding-left: 2px;
  background: #99b2d1;
}

.dock-name {
  margin: 0 10px 0 6px;
  font-size: 16px;
  font-weight: 400;
  line-height: 24px;
}

.rail {
  flex: 830 1 0;
  height: 12px;
  border-top: 2px solid #b9e2f2;
  border-bottom: 2px solid #1c222c;
  background: linear-gradient(#1c222c 2px, #99b2d1 2px 5px, #b9e2f2 5px 7px, #99b2d1 7px);
}

.rail:last-child {
  flex-grow: 786;
}

.grip-dots {
  width: 32px;
  height: 14px;
}

/* Toolbars */
.band {
  display: flex;
  gap: 2px;
  flex: none;
  height: 48px;
}

.group {
  display: flex;
  align-items: center;
  flex: none;
  padding: 0 6px 0 16px;
  border: 1px solid #fff;
  border-right: 2px solid #888;
  border-bottom: 2px solid #888;
  background: linear-gradient(90deg, #fff 1px, #efefef 1px 3px, #7c7c7c 3px 4px, #efefef 4px) 3px 3px / 5px 40px no-repeat;
}

.band-first .group {
  padding-bottom: 3px;
}

.band-first .group-modes {
  padding-bottom: 0;
}

.tool {
  width: 33px;
  height: 33px;
}

.icon {
  width: 24px;
  height: 24px;
}

.raised {
  width: 30px;
  height: 30px;
  margin: 0 3px 0 6px;
  border: 1px solid #fff;
  border-right: 2px solid #888;
  border-bottom: 2px solid #888;
}

.pressed {
  border: 1px solid #fff;
  border-top: 2px solid #888;
  border-left: 2px solid #888;
  background: #fff;
}

.drop {
  width: 13px;
  height: 30px;
}

.caret {
  width: 8px;
  height: 5px;
}

.flip {
  transform: rotate(180deg);
}

.sep {
  width: 17px;
  height: 24px;
  background: repeating-linear-gradient(#555 0 1px, transparent 1px 3px) 50% 0 / 2px 100% no-repeat;
}

.runlength {
  display: flex;
  gap: 2px;
  margin: 0 6px;
}

.field {
  height: 28px;
  padding: 0 3px;
  border: 1px solid #fff;
  border-top: 2px solid #999;
  border-left: 2px solid #999;
  border-radius: 0;
  background: #fff;
  color: #222;
  font: inherit;
}

.mono {
  width: 90px;
  padding: 0 1px;
  font: 17px "Liberation Mono", monospace;
  text-align: right;
}

.spin {
  display: flex;
  flex-direction: column;
}

.step {
  width: 20px;
  height: 14px;
  border: 1px solid #fff;
  border-right: 2px solid #888;
  border-bottom: 2px solid #888;
}

.step-caret {
  width: 13px;
  height: 8px;
}

.search-label {
  padding: 0 10px 0 7px;
}

.search {
  width: 173px;
  margin-right: 4px;
}

.combo {
  width: 26px;
  height: 26px;
  margin-right: 3px;
  border: 1px solid #fff;
  border-right: 2px solid #888;
  border-bottom: 2px solid #888;
}

.combo-caret {
  width: 19px;
  height: 11px;
}

.search-end {
  margin-right: 5px;
}

/* Signal list and waveforms */
.viewer {
  display: flex;
  flex: 1;
  min-height: 0;
  border-top: 4px solid #fafafa;
  border-left: 2px solid #fafafa;
  overflow: hidden;
}

.signals {
  flex: none;
  width: 588px;
  height: 100%;
  border-top: 1px solid #777;
  border-spacing: 0;
  background: #808080;
  color: #fff;
  table-layout: fixed;
}

.signals th,
.signals td {
  padding: 0;
  border-right: 4px double #f4f4f4;
  text-align: left;
  font-weight: 400;
  white-space: nowrap;
}

.signals th {
  height: 32px;
  border-bottom: 4px solid #f4f4f4;
}

.signals td {
  height: 26px;
  line-height: 25px;
}

.signals tr:nth-child(even) td {
  height: 25px;
}

.signals tbody tr:first-child td {
  height: 28px;
  padding-top: 2px;
}

.col-name {
  width: 434px;
}

.signals .col-value {
  padding: 2px 8px 0 0;
  text-align: right;
}

.head-tools {
  display: flex;
  align-items: center;
  gap: 6px;
  padding-left: 15px;
}

.shapes {
  width: 24px;
  height: 26px;
}

.signals .name {
  border-left: 12px solid #fff;
}

.signals .value {
  padding-left: 3px;
}

.cell {
  display: flex;
  align-items: center;
  height: 25px;
}

.node {
  display: flex;
  width: 29px;
  padding-left: 9px;
}

.node:has(.expand) {
  background: linear-gradient(#ddd, #ddd) 24px 50% / 5px 1px no-repeat;
}

.expand {
  width: 14px;
  height: 15px;
  background:
    linear-gradient(#000, #000) 50% 50% / 8px 2px no-repeat,
    linear-gradient(#000, #000) 50% 50% / 2px 8px no-repeat,
    linear-gradient(#fff, #d4dcf0);
}

.sig {
  width: 24px;
  height: 24px;
  margin-right: 7px;
}

.signals .selected td {
  background: #fff;
  color: #111;
}

.signals .rest td {
  height: auto;
  vertical-align: top;
}

.insert-line {
  display: flex;
  align-items: center;
  height: 4px;
  margin-right: 6px;
  background: linear-gradient(#000, #000) 0 50% / 100% 2px no-repeat;
}

.name .insert-line {
  margin-left: 4px;
}

.marker {
  width: 6px;
  height: 10px;
  background: #808080;
}

.waves {
  display: flex;
  flex: 1;
  flex-direction: column;
  min-width: 0;
  border-top: 1px solid #777;
  background: #000;
}

.ruler {
  width: 100%;
  height: 32px;
  border-bottom: 4px solid #f4f4f4;
}

.canvas {
  flex: 1;
  width: 100%;
  min-height: 0;
}

.cursor {
  fill: #ffd400;
}

.clock,
.solid {
  fill: #3aff14;
}

.grid {
  fill: none;
  stroke: #666;
  stroke-width: 2px;
}

.bit path {
  fill: none;
  stroke: #28b810;
  stroke-width: 2px;
}

.bus path {
  fill: none;
  stroke: #84c084;
  stroke-width: 2px;
}

.bus-text {
  fill: #fff;
  font: 16px "Noto Sans", "Open Sans", sans-serif;
}
```
